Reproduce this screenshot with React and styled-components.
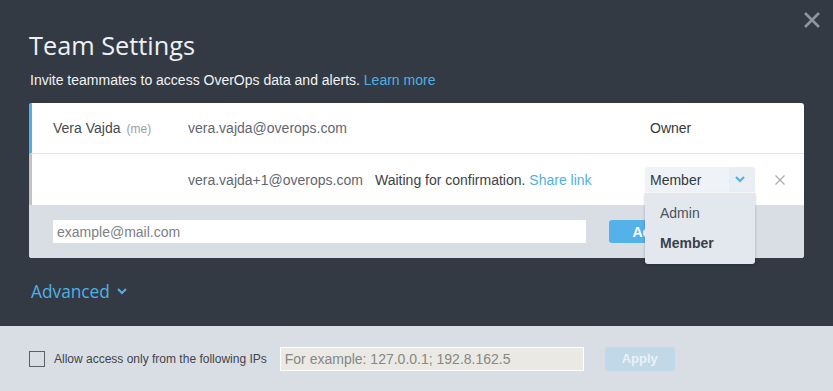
import React, { useState } from "react"
import styled, { createGlobalStyle } from "styled-components"

const GlobalStyle = createGlobalStyle`
	html, body {
		margin: 0;
		padding: 0;
		background: #333a43;
		font-family: "Liberation Sans", Arial, sans-serif;
	}
`

const Page = styled.div`
	display: flex;
	flex-direction: column;
	height: 391px;
	overflow: hidden;
`

const Main = styled.div`
	position: relative;
	flex: 1;
	padding: 28px 29px 0 29px;
`

const CloseButton = styled.button`
	position: absolute;
	top: 11px;
	right: 12px;
	width: 18px;
	height: 18px;
	padding: 0;
	border: none;
	background: none;
	cursor: pointer;
`

const Title = styled.h1`
	margin: 0;
	font-family: "Open Sans", sans-serif;
	font-weight: 500;
	font-size: 25.3px;
	line-height: 34px;
	color: #eef0f3;
`

const Subtitle = styled.p`
	margin: 9px 0 0 1px;
	font-size: 14px;
	line-height: 18px;
	color: #f2f3f5;
`

const Link = styled.a`
	color: #4fb0e6;
	text-decoration: none;
	cursor: pointer;
`

const Card = styled.div`
	margin-top: 14px;
	border-radius: 3px;
	background: #ffffff;
`

const Row = styled.div`
	display: grid;
	grid-template-columns: 135px 187px 270px 110px 1fr;
	align-items: center;
	height: ${props => props.height}px;
	padding-left: 21px;
	border-left: 3px solid ${props => props.accent};
	border-bottom: ${props => (props.divider ? "1px solid #e3e6ea" : "none")};
	border-top-left-radius: ${props => (props.first ? "3px" : "0")};
	font-size: 14px;
	box-sizing: border-box;
`

const Name = styled.span`
	color: #444a52;
`

const Me = styled.span`
	margin-left: 6px;
	font-size: 12px;
	color: #9a9ea4;
`

const Email = styled.span`
	color: #5f6670;
`

const Status = styled.span`
	color: #3d4249;
`

const Role = styled.span`
	padding-left: 5px;
	color: #33383e;
`

const SelectWrap = styled.div`
	position: relative;
	height: 25px;
`

const SelectBox = styled.div`
	display: flex;
	align-items: center;
	height: 25px;
	border-radius: 3px 3px 0 0;
	background: #eff2f6;
	color: #33383e;
	cursor: pointer;
`

const SelectLabel = styled.span`
	flex: 1;
	padding-left: 5px;
`

const SelectArrow = styled.span`
	display: flex;
	align-items: center;
	justify-content: center;
	width: 22px;
	height: 100%;
	padding-right: 4px;
	background: #e9eef4;
	border-top-right-radius: 3px;
`

const Menu = styled.ul`
	position: absolute;
	top: 26px;
	left: 0;
	width: 110px;
	margin: 0;
	padding: 5px 0 6px;
	list-style: none;
	background: #e3e8ef;
	border-radius: 0 0 3px 3px;
	box-shadow: 0 1px 3px rgba(0, 0, 0, 0.25);
	z-index: 2;
`

const MenuItem = styled.li`
	height: 30px;
	line-height: 30px;
	padding-left: 15px;
	font-size: 14px;
	color: ${props => (props.selected ? "#3a3f46" : "#4c525a")};
	font-weight: ${props => (props.selected ? 700 : 400)};
	cursor: pointer;
`

const Remove = styled.button`
	justify-self: start;
	margin-left: 20px;
	padding: 0;
	border: none;
	background: none;
	display: flex;
	cursor: pointer;
`

const AddRow = styled.div`
	display: flex;
	align-items: center;
	gap: 23px;
	height: 53px;
	padding-left: 24px;
	background: #d9dee5;
	border-radius: 0 0 3px 3px;
`

const EmailInput = styled.input`
	width: 533px;
	height: 23px;
	box-sizing: border-box;
	border: none;
	outline: none;
	padding: 0 4px;
	font-family: "Liberation Sans", Arial, sans-serif;
	font-size: 14px;
	color: #333;
	background: #ffffff;

	&::placeholder {
		color: #7c8088;
	}
`

const AddButton = styled.button`
	width: 74px;
	height: 23px;
	border: none;
	border-radius: 3px;
	background: #55b2e8;
	color: #ffffff;
	font-family: "Liberation Sans", Arial, sans-serif;
	font-weight: 700;
	font-size: 14px;
	cursor: pointer;
`

const Advanced = styled.button`
	display: flex;
	align-items: center;
	gap: 7px;
	margin-top: 22px;
	margin-left: 2px;
	padding: 0;
	border: none;
	background: none;
	font-family: "Open Sans", sans-serif;
	font-weight: 500;
	font-size: 17.3px;
	color: #4fb0e6;
	cursor: pointer;
`

const Footer = styled.div`
	display: flex;
	align-items: center;
	height: 65px;
	padding-left: 29px;
	background: #d9dee5;
`

const Check = styled.span`
	width: 14px;
	height: 14px;
	border: 1px solid #5b6068;
	box-sizing: content-box;
	cursor: pointer;
`

const CheckLabel = styled.span`
	margin-left: 9px;
	font-size: 12px;
	color: #3f444b;
`

const IpInput = styled.input`
	width: 304px;
	height: 24px;
	margin-left: 13px;
	box-sizing: border-box;
	border: 1px solid #ffffff;
	outline: none;
	padding: 0 4px;
	background: #eae9e3;
	font-family: "Liberation Sans", Arial, sans-serif;
	font-size: 14px;

	&::placeholder {
		color: #878787;
	}
`

const ApplyButton = styled.button`
	width: 70px;
	height: 24px;
	margin-left: 21px;
	border: none;
	border-radius: 3px;
	background: #c1d8e8;
	color: #eaf2f8;
	font-family: "Liberation Sans", Arial, sans-serif;
	font-weight: 700;
	font-size: 13px;
`

const Chevron = ({ size = 10, color = "#4fb0e6" }) => (
	<svg width={size} height={size * 0.65} viewBox="0 0 10 6.5">
		<path d="M1 1l4 4 4-4" fill="none" stroke={color} strokeWidth="2" />
	</svg>
)

const App = () => {
	const [role] = useState("Member")

	return (
		<Page>
			<GlobalStyle />
			<Main>
				<CloseButton aria-label='Close'>
					<svg width='18' height='18' viewBox='0 0 18 18'>
						<path d='M2 2l14 14M16 2L2 16' stroke='#8c95a0' strokeWidth='2.6' />
					</svg>
				</CloseButton>
				<Title>Team Settings</Title>
				<Subtitle>
					Invite teammates to access OverOps data and alerts. <Link>Learn more</Link>
				</Subtitle>
				<Card>
					<Row height={51} accent='#4fb0e6' divider first>
						<Name>
							Vera Vajda<Me>(me)</Me>
						</Name>
						<Email>vera.vajda@overops.com</Email>
						<span />
						<Role>Owner</Role>
						<span />
					</Row>
					<Row height={51} accent='#c2c2c2'>
						<span />
						<Email>vera.vajda+1@overops.com</Email>
						<Status>
							Waiting for confirmation. <Link>Share link</Link>
						</Status>
						<SelectWrap>
							<SelectBox>
								<SelectLabel>{role}</SelectLabel>
								<SelectArrow>
									<Chevron size={10} />
								</SelectArrow>
							</SelectBox>
							<Menu>
								<MenuItem>Admin</MenuItem>
								<MenuItem selected>Member</MenuItem>
							</Menu>
						</SelectWrap>
						<Remove aria-label='Remove'>
							<svg width='10' height='10' viewBox='0 0 10 10'>
								<path d='M0.5 0.5l9 9M9.5 0.5l-9 9' stroke='#a9adb2' strokeWidth='1.3' />
							</svg>
						</Remove>
					</Row>
					<AddRow>
						<EmailInput placeholder='example@mail.com' />
						<AddButton>Add</AddButton>
					</AddRow>
				</Card>
				<Advanced>
					Advanced <Chevron size={10} />
				</Advanced>
			</Main>
			<Footer>
				<Check />
				<CheckLabel>Allow access only from the following IPs</CheckLabel>
				<IpInput placeholder='For example: 127.0.0.1; 192.8.162.5' />
				<ApplyButton>Apply</ApplyButton>
			</Footer>
		</Page>
	)
}

export default App
